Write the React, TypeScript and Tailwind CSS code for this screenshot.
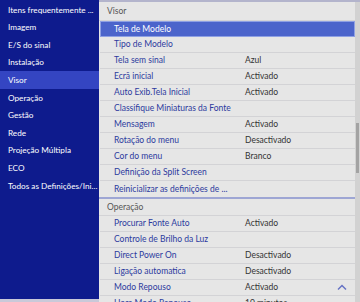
const leftItems = [
  "Itens frequentemente ...",
  "Imagem",
  "E/S do sinal",
  "Instalação",
  "Visor",
  "Operação",
  "Gestão",
  "Rede",
  "Projeção Múltipla",
  "ECO",
  "Todos as Definições/Ini...",
];

interface Row {
  label: string;
  value?: string;
}

const visorRows: Row[] = [
  { label: "Tela de Modelo" },
  { label: "Tipo de Modelo" },
  { label: "Tela sem sinal", value: "Azul" },
  { label: "Ecrã inicial", value: "Activado" },
  { label: "Auto Exib.Tela Inicial", value: "Activado" },
  { label: "Classifique Miniaturas da Fonte" },
  { label: "Mensagem", value: "Activado" },
  { label: "Rotação do menu", value: "Desactivado" },
  { label: "Cor do menu", value: "Branco" },
  { label: "Definição da Split Screen" },
  { label: "Reinicializar as definições de ..." },
];

const operacaoRows: Row[] = [
  { label: "Procurar Fonte Auto", value: "Activado" },
  { label: "Controle de Brilho da Luz" },
  { label: "Direct Power On", value: "Desactivado" },
  { label: "Ligação automatica", value: "Desactivado" },
  { label: "Modo Repouso", value: "Activado" },
  { label: "Hora Modo Repouso", value: "10 minutos" },
];

function MenuRow({ row, selected, last }: { row: Row; selected?: boolean; last?: boolean }) {
  if (selected) {
    return (
      <div className="h-4 flex items-center bg-[#4b64cb] border border-[#8ea0e3] ml-[1px] pl-[13px] text-white">
        <span className="whitespace-nowrap">{row.label}</span>
      </div>
    );
  }
  return (
    <div
      className={
        "h-4 flex items-center pl-[14px] ml-[1px] " +
        (last ? "" : "border-b border-[#d3d3d6]")
      }
    >
      <span className="w-[131px] shrink-0 whitespace-nowrap text-[#2c3a9e]">{row.label}</span>
      {row.value && <span className="whitespace-nowrap text-[#333]">{row.value}</span>}
    </div>
  );
}

export default function App() {
  return (
    <div
      className="w-[360px] h-[302px] overflow-hidden flex text-[8.5px] leading-none"
      style={{ fontFamily: 'Lato, "Noto Sans", sans-serif' }}
    >
      <aside className="w-[99px] shrink-0 h-full overflow-hidden bg-[#0e1b8d] pt-[1px] border-b-[3px] border-[#c9c9d9] text-[8.2px]">
        {leftItems.map((item) => (
          <div
            key={item}
            className={
              "h-[17.6px] flex items-center pl-[8px] whitespace-nowrap text-white " +
              (item === "Visor" ? "bg-[#3445c2]" : "")
            }
          >
            {item}
          </div>
        ))}
      </aside>

      <main className="flex-1 h-full flex bg-[#e6e6e6] border-t-2 border-[#b3b4cc]">
        <div className="flex-1 overflow-hidden">
          <div className="h-[19px] flex items-center pl-[8px] text-[#555] border-b border-[#d3d3d6]">
            Visor
          </div>
          {visorRows.map((row, i) => (
            <MenuRow key={row.label} row={row} selected={i === 0} last={i === visorRows.length - 1} />
          ))}
          <div className="h-[2px] bg-[#9ea6d4]" />
          <div className="h-[17px] flex items-center pl-[8px] text-[#555] border-b border-[#d3d3d6]">
            Operação
          </div>
          {operacaoRows.map((row, i) => (
            <div key={row.label} className="relative">
              <MenuRow row={row} />
              {i === 4 && (
                <svg
                  className="absolute right-[8px] top-[4px]"
                  width="10"
                  height="7"
                  viewBox="0 0 10 7"
                  fill="none"
                  stroke="#6673c4"
                  strokeWidth="1.5"
                >
                  <path d="M1 5.5 L5 1.5 L9 5.5" />
                </svg>
              )}
            </div>
          ))}
        </div>
        <div className="w-[5px] h-full bg-[#d2d2d2] flex flex-col">
          <div className="mt-[121px] h-[50px] mx-[1px] bg-[#a3a3a3]" />
        </div>
      </main>
    </div>
  );
}
